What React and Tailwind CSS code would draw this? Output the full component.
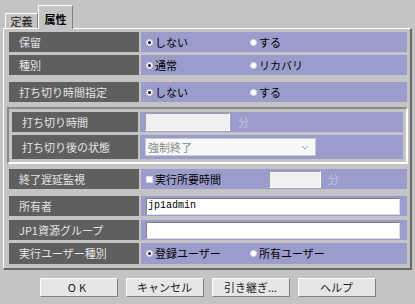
import React from 'react';

const font = { fontFamily: '"Noto Sans CJK JP", "Noto Sans", sans-serif' };

function Radio({ checked, children }) {
  return (
    <div className="flex items-center gap-[2px] w-[104px]">
      <span className="w-[7px] h-[7px] rounded-full bg-white border border-[#d8d8e8] flex items-center justify-center">
        {checked && <span className="w-[3px] h-[3px] rounded-full bg-black" />}
      </span>
      <span>{children}</span>
    </div>
  );
}

function Row({ label, h = 'h-[20px]', lw = 'w-[130px]', children }) {
  return (
    <div className={`flex ${h} gap-[2px]`}>
      <div className={`${lw} shrink-0 bg-[#5f5f5f] text-[#e4e4e4] pl-[10px] flex items-center`}>{label}</div>
      <div className="flex-1 bg-[#9c9ccc] flex items-center pl-[5px] text-black">{children}</div>
    </div>
  );
}

function Button({ children, className = '' }) {
  return (
    <button className={`w-[78px] h-[19px] bg-[#e6e6e6] border border-t-white border-l-white border-r-[#808080] border-b-[#808080] text-[11px] text-[#202020] flex items-center justify-center ${className}`}>
      {children}
    </button>
  );
}

export default function App() {
  return (
    <div className="w-[415px] h-[304px] bg-[#c4c4c4] text-[11px] leading-none overflow-hidden" style={font}>
      {/* tabs */}
      <div className="h-[28px] flex items-end pl-[5px]">
        <div className="w-[33px] h-[15px] border-t border-l border-white border-r border-r-[#808080] flex items-center justify-center text-[#202020]">
          定義
        </div>
        <div className="w-[35px] h-[24px] border-t border-l border-white border-r border-r-[#808080] bg-[#c4c4c4] -mb-px relative z-10 flex items-start pt-[8px] justify-center font-bold text-black">
          属性
        </div>
      </div>

      {/* panel */}
      <div className="ml-[3px] w-[409px] h-[242px] border-t border-l border-white border-r-2 border-r-[#6a6a6a] border-b-2 border-b-[#6a6a6a] pt-[3px] pl-[5px] pr-[3px] flex flex-col">
        <Row label="保留">
          <Radio checked>しない</Radio>
          <Radio>する</Radio>
        </Row>
        <div className="h-[3px]" />
        <Row label="種別">
          <Radio checked>通常</Radio>
          <Radio>リカバリ</Radio>
        </Row>
        <div className="h-[7px]" />
        <Row label="打ち切り時間指定">
          <Radio checked>しない</Radio>
          <Radio>する</Radio>
        </Row>
        <div className="h-[5px]" />

        <div className="-ml-[2px] -mr-[1px] border-2 border-t-[#8a8a8a] border-l-[#8a8a8a] border-r-white border-b-white p-[3px] flex flex-col gap-[3px]">
          <Row label="打ち切り時間" lw="w-[126px]">
            <div className="w-[85px] h-[18px] bg-[#f0f0f0] border border-t-[#a0a0a0] border-l-[#a0a0a0] border-r-white border-b-white" />
            <span className="ml-[8px] text-[#c4c4dc]">分</span>
          </Row>
          <Row label="打ち切り後の状態" lw="w-[126px]" h="h-[24px]">
            <div className="w-[171px] h-[18px] bg-[#f8f8f8] border border-[#c8c8d8] flex items-center justify-between pl-[2px] pr-[6px] text-[#8a8a8a]">
              <span>強制終了</span>
              <svg width="8" height="5" viewBox="0 0 8 5"><path d="M1 1 L4 4 L7 1" fill="none" stroke="#a0a0a0" strokeWidth="1" /></svg>
            </div>
          </Row>
        </div>

        <div className="h-[5px]" />
        <Row label="終了遅延監視">
          <div className="flex items-center gap-[2px] w-[123px]">
            <span className="w-[7px] h-[7px] bg-white border border-[#d8d8e8]" />
            <span>実行所要時間</span>
          </div>
          <div className="w-[52px] h-[17px] bg-[#f0f0f0] border border-t-[#a0a0a0] border-l-[#a0a0a0] border-r-white border-b-white" />
          <span className="ml-[7px] text-[#c4c4dc]">分</span>
        </Row>
        <div className="h-[7px]" />
        <Row label="所有者">
          <div className="w-[254px] h-[17px] bg-white border border-t-[#808080] border-l-[#808080] border-r-[#e0e0e0] border-b-[#e0e0e0] flex items-center pl-[1px] text-[10px] text-black" style={{ fontFamily: '"Liberation Mono", monospace' }}>
            jp1admin
          </div>
        </Row>
        <div className="h-[4px]" />
        <Row label="JP1資源グループ">
          <div className="w-[254px] h-[17px] bg-white border border-t-[#808080] border-l-[#808080] border-r-[#e0e0e0] border-b-[#e0e0e0]" />
        </Row>
        <div className="h-[3px]" />
        <Row label="実行ユーザー種別" h="h-[21px]">
          <Radio checked>登録ユーザー</Radio>
          <Radio>所有ユーザー</Radio>
        </Row>
      </div>

      {/* buttons */}
      <div className="flex justify-center gap-[8px] mt-[8px]">
        <Button className="tracking-[3px]">OK</Button>
        <Button>キャンセル</Button>
        <Button>引き継ぎ...</Button>
        <Button>ヘルプ</Button>
      </div>
    </div>
  );
}
